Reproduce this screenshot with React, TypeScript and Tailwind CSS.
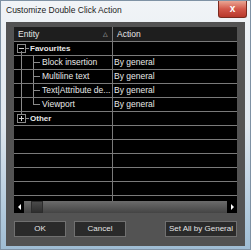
import React from 'react';

const FONT = { fontFamily: '"Liberation Sans", Arial, sans-serif' };

const children = ['Block insertion', 'Multiline text', 'Text|Attribute de...', 'Viewport'];

const TreeBox: React.FC<{ open: boolean }> = ({ open }) => (
  <div className="relative flex h-[9px] w-[9px] shrink-0 items-center justify-center border border-[#8a8a8a] bg-black">
    <div className="h-px w-[5px] bg-[#d0d0d0]" />
    {!open && <div className="absolute h-[5px] w-px bg-[#d0d0d0]" />}
  </div>
);

const App: React.FC = () => {
  const emptyRows = Array.from({ length: 7 });

  return (
    <div
      className="flex h-[250px] w-[251px] flex-col border border-[#7f92a4] bg-linear-to-b from-[#f1f4f7] via-[#dfe7ee] to-[#9fbdd4]"
      style={FONT}
    >
      {/* Title bar */}
      <div className="flex h-[21px] items-start justify-between">
        <span className="pl-[5px] pt-[4px] text-[8.5px] leading-[10px] text-[#1b1b1b]">
          Customize Double Click Action
        </span>
        <div className="mr-[3px] flex h-[17px] w-[29px] items-center justify-center rounded-b-[3px] border border-t-0 border-[#7a2a1f] bg-linear-to-b from-[#e9a594] via-[#d2574a] to-[#b8382b]">
          <span className="text-[10px] font-bold leading-none text-white">x</span>
        </div>
      </div>

      {/* Client area */}
      <div className="mx-[5px] mb-[3px] flex flex-1 flex-col bg-[#535353] px-[8px] pt-[5px]">
        {/* Table */}
        <div className="flex h-[174px] flex-col overflow-hidden bg-black text-[8.5px] leading-[13px] text-[#e8e8e8]">
          {/* Header */}
          <div className="grid h-[15px] shrink-0 grid-cols-[99px_1fr] border-b border-[#7a7a7a] bg-[#1e1e1e]">
            <div className="flex items-center justify-between border-r border-[#7a7a7a] pl-[4px] pr-[4px]">
              <span>Entity</span>
              <span className="text-[6px] text-[#cfcfcf]">△</span>
            </div>
            <div className="flex items-center pl-[4px]">Action</div>
          </div>

          {/* Favourites */}
          <div className="grid h-[14px] shrink-0 grid-cols-[99px_1fr] border-b border-[#7a7a7a]">
            <div className="relative flex items-center border-r border-[#7a7a7a] pl-[3px]">
              <TreeBox open />
              <div className="h-px w-[3px] bg-[#8a8a8a]" />
              <span className="pl-px text-[8px] font-bold">Favourites</span>
              <div className="absolute bottom-0 left-[7px] top-[9px] w-px bg-[#8a8a8a]" />
            </div>
            <div />
          </div>

          {children.map((name, i) => (
            <div key={name} className="grid h-[14px] shrink-0 grid-cols-[99px_1fr] border-b border-[#7a7a7a]">
              <div className="flex items-stretch overflow-hidden border-r border-[#7a7a7a]">
                <div className="w-[7px] shrink-0" />
                <div className="w-[12px] shrink-0 border-l border-[#8a8a8a]" />
                <div className="relative w-[9px] shrink-0">
                  <div
                    className={`absolute left-0 top-0 w-px bg-[#8a8a8a] ${
                      i === children.length - 1 ? 'h-[7px]' : 'h-full'
                    }`}
                  />
                  <div className="absolute left-0 top-[6px] h-px w-[7px] bg-[#8a8a8a]" />
                </div>
                <span className="flex items-center whitespace-nowrap">{name}</span>
              </div>
              <div className="flex items-center pl-px">By general</div>
            </div>
          ))}

          {/* Other */}
          <div className="grid h-[14px] shrink-0 grid-cols-[99px_1fr] border-b border-[#7a7a7a]">
            <div className="relative flex items-center border-r border-[#7a7a7a] pl-[3px]">
              <div className="absolute left-[7px] top-0 h-[3px] w-px bg-[#8a8a8a]" />
              <TreeBox open={false} />
              <div className="h-px w-[3px] bg-[#8a8a8a]" />
              <span className="pl-px text-[8px] font-bold">Other</span>
            </div>
            <div />
          </div>

          {emptyRows.map((_, i) => (
            <div key={i} className="grid h-[14px] shrink-0 grid-cols-[99px_1fr] border-b border-[#7a7a7a]">
              <div className="border-r border-[#7a7a7a]" />
              <div />
            </div>
          ))}
        </div>

        {/* Horizontal scrollbar */}
        <div className="flex h-[12px] items-stretch bg-linear-to-b from-[#6c6c6c] to-[#444]">
          <div className="flex w-[10px] items-center justify-center bg-black">
            <div className="h-0 w-0 border-y-[3px] border-r-[3px] border-y-transparent border-r-white" />
          </div>
          <div className="flex flex-1 items-stretch pl-[7px]">
            <div className="w-[12px] border border-[#2c2c2c] bg-linear-to-b from-[#4a4a4a] to-[#2f2f2f]" />
          </div>
          <div className="flex w-[10px] items-center justify-center bg-black">
            <div className="h-0 w-0 border-y-[3px] border-l-[3px] border-y-transparent border-l-white" />
          </div>
        </div>

        {/* Buttons */}
        <div className="mt-[8px] flex h-[16px] items-stretch text-[8px] text-[#e4e4e4]">
          <button className="flex w-[52px] items-center justify-center border border-[#707070] bg-[#2a2a2a]">OK</button>
          <button className="ml-[8px] flex w-[52px] items-center justify-center border border-[#707070] bg-[#2a2a2a]">
            Cancel
          </button>
          <div className="flex-1" />
          <button className="flex w-[72px] items-center justify-center border border-[#707070] bg-[#2a2a2a]">
            Set All by General
          </button>
        </div>
      </div>
    </div>
  );
};

export default App;
